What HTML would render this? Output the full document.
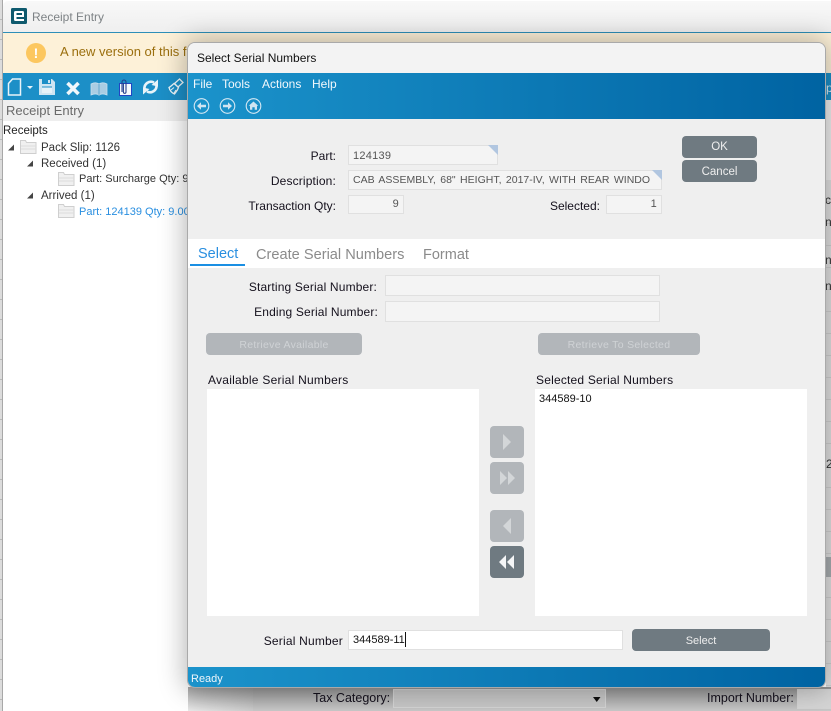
<!DOCTYPE html>
<html><head><meta charset="utf-8">
<style>
html,body{margin:0;padding:0;width:831px;height:711px;overflow:hidden;background:#fff}
body{position:relative;font-family:"Liberation Sans",sans-serif;font-size:12px;color:#111}
.a{position:absolute;white-space:nowrap}
.l{position:absolute;white-space:nowrap;text-align:right;color:#14101c}
.f{position:absolute;box-sizing:border-box;background:#f4f4f4;border:1px solid #e0e0e0;color:#555;font-size:11px;letter-spacing:.25px}
.b{position:absolute;box-sizing:border-box;background:#6f7a81;border-radius:4px;color:#eee;text-align:center;font-size:11.5px}
.d{background:#b2b6ba;color:#cfd2d5;font-size:10.5px;letter-spacing:.3px}
svg{position:absolute;display:block;overflow:visible}
</style></head><body>

<!-- left-edge grid strip -->
<div class="a" style="left:0;top:0;width:3px;height:711px;background:repeating-linear-gradient(180deg,#dcdcdc 0,#dcdcdc 19px,#b9b9b9 19px,#b9b9b9 20px)"></div>
<div class="a" style="left:2px;top:0;width:1px;height:711px;background:#a8a8a8"></div>

<!-- back window -->
<div class="a" style="left:3px;top:1px;width:828px;height:710px;background:#fff;border-radius:5px 0 0 0;overflow:hidden">
  <div class="a" style="left:0;top:0;width:828px;height:31px;background:linear-gradient(#f8f8f8,#efefef)"></div>
  <div class="a" style="left:0;top:31px;width:828px;height:1px;background:#2e8fb8"></div>
  <div class="a" style="left:0;top:32px;width:828px;height:40px;background:#fdf1d8"></div>
  <div class="a" style="left:0;top:72px;width:828px;height:27px;background:#1c8fc7"></div>
  <div class="a" style="left:0;top:99px;width:828px;height:21px;background:#eeeeee"></div>
</div>
<svg style="left:11px;top:8px" width="16" height="16" viewBox="0 0 16 16">
  <rect width="16" height="16" rx="1.500" fill="#0f5a6e"/>
  <path d="M3 4.500q0-1.500 1.500-1.500h7q1.500 0 1.500 1.500V9H5.500v2H13v2H4.500Q3 13 3 11.500zM5.500 5v2H11V5z" fill="#fff"/>
</svg>
<div class="a" style="left:32px;top:10px;font-size:12px;color:#7d8285">Receipt Entry</div>

<div class="a" style="left:26px;top:43px;width:20px;height:20px;border-radius:50%;background:#fcc75f;color:#fff;font-weight:bold;font-size:14px;line-height:20px;text-align:center">!</div>
<div class="a" style="left:60px;top:44px;font-size:13px;color:#9b6f0e">A new version of this form</div>

<!-- toolbar icons -->
<svg style="left:0;top:73px" width="190" height="27" viewBox="0 0 190 27">
  <path d="M8.500 10.500l4-4.500h8v16h-12z" fill="none" stroke="#e8f3f9" stroke-width="1.500"/>
  <path d="M27 13h6l-3 3z" fill="#e8f3f9"/>
  <path d="M39 6h13l3 3v13H39z" fill="#cfe5f2"/><rect x="42" y="6" width="9" height="5" fill="#1c8fc7"/><rect x="48" y="7" width="2" height="3" fill="#cfe5f2"/><rect x="42" y="14" width="10" height="6" fill="#e6f2f8"/><path d="M42 14h10" stroke="#1c8fc7"/>
  <path d="M67.500 10l11 11M78.500 10l-11 11" stroke="#f0f7fb" stroke-width="3.600"/>
  <path d="M91 11c3-1.500 6-1.500 8 0v11c-2-1.300-5-1.300-8 0zM107 11c-3-1.500-6-1.500-8 0v11c2-1.300 5-1.300 8 0z" fill="#a9cde3" stroke="#c6dfee" stroke-width=".8"/>
  <path d="M99 11v11" stroke="#5fa7cf"/>
  <rect x="119.500" y="10.500" width="12" height="12" fill="#f5f9fd" stroke="#2045c4" stroke-width="1"/>
  <path d="M122 19V9a2 2 0 0 1 4 0v10a1.300 1.300 0 0 1-2.600 0V10" fill="none" stroke="#24408e" stroke-width="1.100"/>
  <path d="M144.500 16a6.500 6.500 0 0 1 9.500-6.500M156.500 12a6.500 6.500 0 0 1-9.500 6.500" fill="none" stroke="#e8f3f9" stroke-width="2.600"/>
  <path d="M158 6.500v7l-6.500-1.500zM143 21.500v-7l6.500 1.500z" fill="#e8f3f9"/>
  <path d="M178 14l-3.500-3.500 5-4.500 3.500 3.500zM174 10.500c-2 1.500-3 3-5 4 .8 3 3 5.500 5.500 6.500 1.500-2 3-3.500 4-6.500z" fill="none" stroke="#eef6fa" stroke-width="1.300"/>
  <path d="M171 17l3-2.500M174 20l2-3" stroke="#eef6fa"/>
</svg>

<div class="a" style="left:6px;top:103px;font-size:13px;color:#6a6a6a">Receipt Entry</div>

<!-- tree -->
<div class="a" style="left:3px;top:125px;font-size:11.5px;color:#222">Receipts</div>
<div class="a" style="left:41px;top:142px;font-size:11.5px;color:#333">Pack Slip: 1126</div>
<div class="a" style="left:41px;top:158px;font-size:11.5px;color:#333">Received (1)</div>
<div class="a" style="left:79px;top:173px;font-size:11px;color:#333">Part: Surcharge Qty: 9</div>
<div class="a" style="left:41px;top:190px;font-size:11.5px;color:#333">Arrived (1)</div>
<div class="a" style="left:79px;top:206px;font-size:11px;color:#2a8fe0">Part: 124139 Qty: 9.00</div>
<svg style="left:0;top:120px" width="80" height="100" viewBox="0 0 80 100">
  <path d="M8 30.500l6-6v6zM27 46.500l6-6v6zM27 78.500l6-6v6z" fill="#444"/>
  <g fill="#f0f0f0" stroke="#cfcfcf" stroke-width="1">
    <path d="M20.500 20.500h5l1 2h9.500v11h-15.500z"/>
    <path d="M58.500 52.500h5l1 2h9.500v11h-15.500z"/>
    <path d="M58.500 84.500h5l1 2h9.500v11h-15.500z"/>
  </g>
  <path d="M21 26h15M21 29h15M59 58h15M59 61h15M59 90h15M59 93h15" stroke="#dcdcdc"/>
</svg>

<!-- right strip content behind dialog -->
<div class="a" style="left:826px;top:121px;width:5px;height:59px;background:#efefef"></div>
<div class="a" style="left:826px;top:180px;width:5px;height:531px;background:repeating-linear-gradient(180deg,#e0e0e0 0,#e0e0e0 21px,#cfcfcf 21px,#cfcfcf 22px)"></div>
<div class="a" style="left:826px;top:81px;font-size:12px;color:#dfeef6">p</div>
<div class="a" style="left:825px;top:193px;font-size:12px;color:#333">ce</div>
<div class="a" style="left:825px;top:215px;font-size:12px;color:#333">n</div>
<div class="a" style="left:825px;top:253px;font-size:12px;color:#333">na</div>
<div class="a" style="left:825px;top:279px;font-size:12px;color:#333">nt</div>
<div class="a" style="left:826px;top:457px;font-size:12px;color:#333">2</div>
<div class="a" style="left:826px;top:557px;width:5px;height:20px;background:#a8adb0"></div>

<!-- bottom area behind dialog -->
<div class="a" style="left:253px;top:687px;width:578px;height:24px;background:#d2d2d2"></div>
<div class="a" style="left:188px;top:687px;width:65px;height:24px;background:linear-gradient(90deg,#f4f4f4,#d6d6d6)"></div>
<div class="a" style="left:188px;top:687px;width:643px;height:24px;background:linear-gradient(rgba(60,60,60,.42),rgba(60,60,60,.06))"></div>
<div class="l" style="left:313px;top:691px;font-size:12.5px">Tax Category:</div>
<div class="a" style="left:393px;top:689px;width:213px;height:19px;box-sizing:border-box;border:1px solid #d4d4d4;background:#c6c6c6"></div>
<svg style="left:593px;top:697px" width="8" height="5"><path d="M0 0h7.500l-3.750 5z" fill="#111"/></svg>
<div class="l" style="left:707px;top:691px;font-size:12.5px">Import Number:</div>
<div class="a" style="left:797px;top:689px;width:34px;height:20px;box-sizing:border-box;border:1px solid #d4d4d4;background:#d5d5d5"></div>

<!-- shadow -->
<div class="a" style="left:188px;top:43px;width:637px;height:644px;border-radius:8px;box-shadow:0 0 26px 4px rgba(0,0,0,.28)"></div>

<!-- dialog -->
<div class="a" style="left:188px;top:43px;width:637px;height:644px;background:#efefef;border-radius:7px 7px 7px 7px;overflow:hidden;box-shadow:0 0 0 1px #a9a9a9">
  <div class="a" style="left:0;top:0;width:637px;height:30px;background:#f3f3f3"></div>
  <div class="a" style="left:0;top:30px;width:637px;height:46px;background:linear-gradient(90deg,#1b93cb,#0063a2)"></div>
  <div class="a" style="left:0;top:196px;width:637px;height:29px;background:#fff"></div>
  <div class="a" style="left:0;top:624px;width:637px;height:20px;background:linear-gradient(90deg,#1b93cb,#0063a2)"></div>
</div>

<div class="a" style="left:197px;top:51px;font-size:12px;color:#111">Select Serial Numbers</div>
<div class="a" style="left:193px;top:77px;font-size:12px;color:#f2f8fc">File</div>
<div class="a" style="left:222px;top:77px;font-size:12px;color:#f2f8fc">Tools</div>
<div class="a" style="left:262px;top:77px;font-size:12px;color:#f2f8fc">Actions</div>
<div class="a" style="left:312px;top:77px;font-size:12px;color:#f2f8fc">Help</div>

<svg style="left:193px;top:98px" width="70" height="17" viewBox="0 0 70 17">
  <circle cx="8.500" cy="8" r="7.300" fill="none" stroke="#d5e8f3" stroke-width="1.100"/>
  <path d="M4 8l4-3.800v2.500h5v2.600H8v2.500z" fill="#cfe4f1"/>
  <circle cx="34.500" cy="8" r="7.300" fill="none" stroke="#d5e8f3" stroke-width="1.100"/>
  <path d="M39 8l-4-3.800v2.500h-5v2.600h5v2.500z" fill="#cfe4f1"/>
  <circle cx="60.500" cy="8" r="7.300" fill="none" stroke="#d5e8f3" stroke-width="1.100"/>
  <path d="M60.500 3.500l4.800 4.300h-1.300v4h-2.300v-2.500h-2.400v2.500h-2.300v-4h-1.300z" fill="#cfe4f1"/>
</svg>

<!-- top form -->
<div class="l" style="right:495px;top:149px">Part:</div>
<div class="f" style="left:348px;top:145px;width:150px;height:20px;line-height:19px;padding-left:4px;padding-top:1px">124139</div>
<svg style="left:488px;top:145px" width="10" height="10"><path d="M0 0h10v10z" fill="#b1c6e0"/></svg>
<div class="l" style="right:495px;top:174px;letter-spacing:.15px">Description:</div>
<div class="f" style="left:348px;top:170px;width:314px;height:20px;line-height:18px;padding-left:4px;font-size:10.5px;word-spacing:1.500px;letter-spacing:0;overflow:hidden">CAB ASSEMBLY, 68" HEIGHT, 2017-IV, WITH REAR WINDO</div>
<svg style="left:652px;top:170px" width="10" height="10"><path d="M0 0h10v10z" fill="#b1c6e0"/></svg>
<div class="l" style="right:495px;top:199px">Transaction Qty:</div>
<div class="f" style="left:348px;top:195px;width:56px;height:19px;line-height:17px;text-align:right;padding-right:4px">9</div>
<div class="l" style="right:231px;top:199px">Selected:</div>
<div class="f" style="left:606px;top:195px;width:56px;height:19px;line-height:17px;text-align:right;padding-right:4px">1</div>

<div class="b" style="left:682px;top:136px;width:75px;height:22px;line-height:23px">OK</div>
<div class="b" style="left:682px;top:160px;width:75px;height:22px;line-height:24px">Cancel</div>

<!-- tabs -->
<div class="a" style="left:198px;top:246px;font-size:14.500px;color:#2a8fe0">Select</div>
<div class="a" style="left:190px;top:264px;width:55px;height:2px;background:#1a8fe3"></div>
<div class="a" style="left:256px;top:247px;font-size:14.600px;color:#8b8b8b">Create Serial Numbers</div>
<div class="a" style="left:423px;top:247px;font-size:14.500px;color:#8b8b8b">Format</div>

<!-- range -->
<div class="l" style="right:454px;top:280px;letter-spacing:.15px">Starting Serial Number:</div>
<div class="f" style="left:385px;top:275px;width:275px;height:21px"></div>
<div class="l" style="right:453px;top:305px;letter-spacing:.15px">Ending Serial Number:</div>
<div class="f" style="left:385px;top:301px;width:275px;height:21px"></div>

<div class="b d" style="left:206px;top:333px;width:156px;height:22px;line-height:24px">Retrieve Available</div>
<div class="b d" style="left:538px;top:333px;width:162px;height:22px;line-height:24px">Retrieve To Selected</div>

<!-- lists -->
<div class="a" style="left:208px;top:373px;font-size:12px;letter-spacing:.25px;color:#14101c">Available Serial Numbers</div>
<div class="a" style="left:536px;top:373px;font-size:12px;letter-spacing:.2px;color:#14101c">Selected Serial Numbers</div>
<div class="a" style="left:207px;top:389px;width:272px;height:227px;background:#fff"></div>
<div class="a" style="left:535px;top:389px;width:272px;height:227px;background:#fff"></div>
<div class="a" style="left:539px;top:393px;font-size:11px;color:#111">344589-10</div>

<!-- arrows -->
<div class="b d" style="left:490px;top:426px;width:34px;height:32px"></div>
<div class="b d" style="left:490px;top:462px;width:34px;height:32px"></div>
<div class="b d" style="left:490px;top:510px;width:34px;height:32px"></div>
<div class="b" style="left:490px;top:546px;width:34px;height:32px"></div>
<svg style="left:490px;top:426px" width="34" height="152" viewBox="0 0 34 152">
  <path d="M13 8l8 8-8 8z" fill="#d3d6d8"/>
  <path d="M10 45l7 7-7 7zM18 45l7 7-7 7z" fill="#d3d6d8"/>
  <path d="M21 92l-8 8 8 8z" fill="#d3d6d8"/>
  <path d="M16 129l-7 7 7 7zM24 129l-7 7 7 7z" fill="#f4f5f6"/>
</svg>

<!-- serial number -->
<div class="l" style="right:488px;top:634px;font-size:12px;letter-spacing:.2px">Serial Number</div>
<div class="a" style="left:348px;top:630px;width:275px;height:20px;box-sizing:border-box;background:#fff;border:1px solid #e0e0e0"></div>
<div class="a" style="left:353px;top:634px;font-size:11px;color:#111">344589-11</div>
<div class="a" style="left:405px;top:632px;width:1px;height:15px;background:#111"></div>
<div class="b" style="left:632px;top:629px;width:138px;height:22px;line-height:24px;font-size:11px">Select</div>

<div class="a" style="left:191px;top:673px;font-size:11px;color:#eef6fb">Ready</div>

</body></html>
